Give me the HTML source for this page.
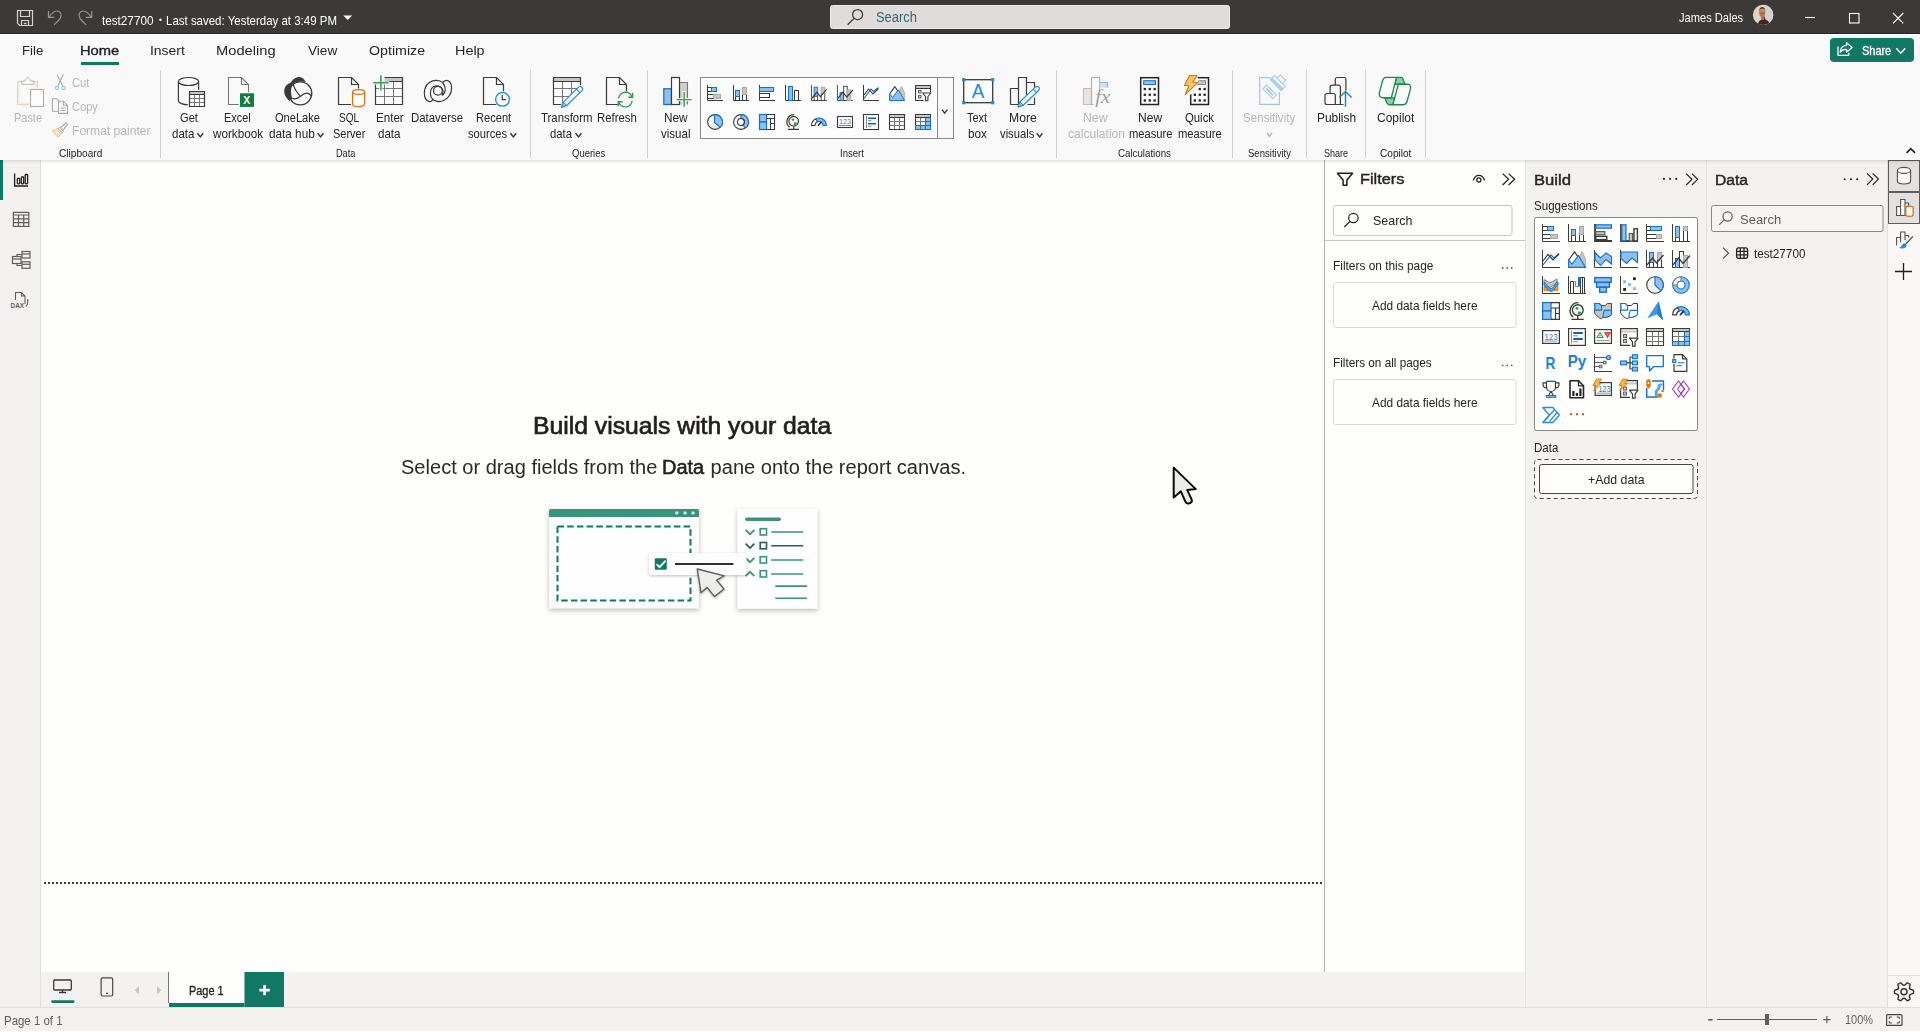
<!DOCTYPE html>
<html lang="en">
<head>
<meta charset="utf-8">
<title>test27700 - Power BI Desktop</title>
<style>
html,body{margin:0;padding:0}
body{width:1920px;height:1032px;position:relative;overflow:hidden;background:#fdfdfc;font-family:"Liberation Sans",sans-serif;-webkit-font-smoothing:antialiased}
.sec{position:absolute;overflow:visible}
.t{position:absolute;white-space:pre;display:block;transform-origin:0 50%}
.a{position:absolute;display:block}
svg{position:absolute;display:block;overflow:visible}
#titlebar{background:#3b3a39;box-shadow:inset 0 -1px 0 #272625}
#menubar{background:#f9f9f9;box-shadow:inset 0 1px 0 #fff}
#ribbon{background:#f9f9f9}
#leftnav{background:#f3f2f1;box-shadow:inset -1px 0 0 #e3e1df}
#canvas{background:#fefefd}
#pagetabs{background:#f3f2f1}
#filters{background:#fefefd;box-shadow:inset 1px 0 0 #b7b3b1}
#build{background:#f3f2f1;box-shadow:inset 1px 0 0 #e6e4e3}
#data{background:#f3f2f1;box-shadow:inset 1px 0 0 #e3e1df}
#rail{background:#f9f8f7;box-shadow:inset 1px 0 0 #e3e1df}
#statusbar{background:#f3f2f1;box-shadow:inset 0 1px 0 #e1dfdd}
.sep{position:absolute;width:1px;top:4px;height:88px;background:#d2d0ce}
.box{position:absolute;box-sizing:border-box}
</style>
</head>
<body>
<div id="titlebar" class="sec" style="left:0px;top:0px;width:1920px;height:34px">
<svg style="left:0;top:0" width="1920" height="34" viewBox="0 0 1920 34" fill="none"><g stroke="#d6d4d2" stroke-width="1.200" stroke-linejoin="miter"><path d="M17.500 10.500H32.500V25.500H19.700L17.500 23.300z"/><path d="M20.500 10.500V16.500H29.500V10.500M21.500 25.500V20.500H28.500V25.500"/><path d="M23.800 23.500h2.600" stroke-width="1.500"/></g><g stroke="#979593" stroke-width="1.200"><path d="M48.500 11v6.400h5.900"/><path d="M49.200 16.800C51.500 13.500 54.500 10.800 57.300 11C59.600 11.200 61.300 13.200 61.100 15.800C60.900 17.800 59.800 19.400 58 21L54.100 24.900"/><path d="M91.700 11v6.400h-5.900"/><path d="M91 16.800C88.700 13.500 85.700 10.800 82.900 11C80.600 11.200 78.900 13.200 79.100 15.800C79.300 17.800 80.400 19.400 82.200 21L86.100 24.900"/></g><path d="M343.3 15.5h9l-4.5 4.6z" fill="#fff"/><rect x="830.500" y="5.500" width="399" height="23" rx="2" fill="#dedddc" stroke="#ebebea"/><g stroke="#3b3a39" stroke-width="1.3"><circle cx="857.6" cy="14.6" r="5"/><path d="M854 18.4L847.6 24.8"/></g><clipPath id="avc"><circle cx="1763.100" cy="14.900" r="10.200"/></clipPath><g clip-path="url(#avc)"><rect x="1752" y="4" width="22" height="22" fill="#dcd3c9"/><rect x="1764" y="4" width="10" height="22" fill="#d3d1cf"/><path d="M1757.600 26c.2-4 1.800-6 4.200-6.600l1.200-3h1.800l.6 3c2.600.6 4.200 2.600 4.400 6.600z" fill="#4a1f26"/><rect x="1761" y="15" width="3.200" height="5" fill="#a8705a"/><ellipse cx="1762.200" cy="12.300" rx="3.100" ry="4.900" fill="#b57b55"/><ellipse cx="1762.400" cy="10.200" rx="2.200" ry="1.600" fill="#d98f3f"/><path d="M1759.100 11c0-5.200 6.200-5.200 6.200 0 0-3.400-6.200-3.400-6.200 0z" fill="#3a3a44"/><path d="M1760.300 13.200h3.800" stroke="#7a5a58" stroke-width=".9"/></g><g stroke="#fff" stroke-width="1.1"><path d="M1805 17.500h10"/><rect x="1849.500" y="13.500" width="9.500" height="9.500"/><path d="M1893 13l10.300 10.300M1903.300 13L1893 23.300"/></g></svg>
<span class="t" style="left:102.40px;top:13.00px;font-size:12.6px;line-height:16px;transform:scaleX(0.9292);color:#ffffff">test27700</span>
<span class="t" style="left:159.20px;top:14.00px;font-size:9px;line-height:12px;transform:scaleX(0.9333);color:#ffffff">•</span>
<span class="t" style="left:166.29px;top:13.00px;font-size:12.6px;line-height:16px;transform:scaleX(0.9111);color:#ffffff">Last saved: Yesterday at 3:49 PM</span>
<span class="t" style="left:875.50px;top:9.00px;font-size:13.8px;line-height:18px;transform:scaleX(0.9363);color:#2c6a70">Search</span>
<span class="t" style="left:1679.00px;top:10.00px;font-size:12.3px;line-height:16px;transform:scaleX(0.9024);color:#ffffff">James Dales</span>
</div>
<div id="menubar" class="sec" style="left:0px;top:34px;width:1920px;height:32px">
<svg style="left:0;top:0" width="1920" height="32" viewBox="0 34 1920 32" fill="none"><rect x="81" y="62" width="38" height="3" fill="#117865"/><rect x="1830" y="38" width="84" height="24" rx="4" fill="#117865"/><g stroke="#fff" stroke-width="1.3" stroke-linejoin="round"><path d="M1838 46.500v8.800h10.800v-2.500"/><path d="M1846.500 42.800l5.600 4.700-5.600 4.700v-2.900c-3.200-.2-5.200 1-6.300 3 .2-4.400 2.400-6.700 6.300-7z"/></g><path d="M1896.3 48.2L1900.8 53.2L1905.3 48.2" stroke="#fff" stroke-width="1.4"/></svg>
<span class="t" style="left:22.22px;top:8.00px;font-size:13.5px;line-height:18px;transform:scaleX(0.9780);color:#252423">File</span>
<span class="t" style="left:80.31px;top:8.00px;font-size:13.5px;line-height:18px;transform:scaleX(1.0898);color:#252423;-webkit-text-stroke:0.38px #252423">Home</span>
<span class="t" style="left:149.67px;top:8.00px;font-size:13.5px;line-height:18px;transform:scaleX(1.0299);color:#252423">Insert</span>
<span class="t" style="left:216.11px;top:8.00px;font-size:13.5px;line-height:18px;transform:scaleX(1.0887);color:#252423">Modeling</span>
<span class="t" style="left:307.50px;top:8.00px;font-size:13.5px;line-height:18px;transform:scaleX(1.0079);color:#252423">View</span>
<span class="t" style="left:368.50px;top:8.00px;font-size:13.5px;line-height:18px;transform:scaleX(1.0521);color:#252423">Optimize</span>
<span class="t" style="left:454.93px;top:8.00px;font-size:13.5px;line-height:18px;transform:scaleX(1.0664);color:#252423">Help</span>
<span class="t" style="left:1861.70px;top:9.00px;font-size:12.4px;line-height:16px;transform:scaleX(0.8833);color:#ffffff;-webkit-text-stroke:0.35px #ffffff">Share</span>
</div>
<div id="ribbon" class="sec" style="left:0px;top:66px;width:1920px;height:94px">
<svg style="left:0;top:0" width="1920" height="94" viewBox="0 66 1920 94" fill="none"><rect x="160" y="70" width="1" height="88" fill="#d2d0ce"/><rect x="530" y="70" width="1" height="88" fill="#d2d0ce"/><rect x="647" y="70" width="1" height="88" fill="#d2d0ce"/><rect x="1056" y="70" width="1" height="88" fill="#d2d0ce"/><rect x="1232" y="70" width="1" height="88" fill="#d2d0ce"/><rect x="1306" y="70" width="1" height="88" fill="#d2d0ce"/><rect x="1365" y="70" width="1" height="88" fill="#d2d0ce"/><rect x="1425" y="70" width="1" height="88" fill="#d2d0ce"/><rect x="17.500" y="81.500" width="20" height="23" fill="#f3ebe5"/><rect x="19.500" y="83" width="16" height="19.500" fill="#fbfbfb"/><rect x="17.500" y="81.500" width="20" height="23" stroke="#f6b870" stroke-dasharray="1.200 .800"/><path d="M21.600 84.400v-3.400h3.600c.2-2.200 1.200-3.300 2.600-3.300s2.400 1.100 2.600 3.300h3.600v3.400z" fill="#fbfbfb" stroke="#bcbab8" stroke-width="1"/><rect x="29.300" y="88.300" width="15.400" height="19.400" fill="#f9f9f9"/><rect x="30.500" y="89.500" width="13" height="17" fill="#fcfcfc" stroke="#b0aeac" stroke-width="1.100"/><g opacity=".6"><path d="M57 74.600l5.800 11.600M63.400 74.600l-5.800 11.600" stroke="#797775" stroke-width="1.100"/><rect x="55.600" y="86.400" width="3" height="3" fill="#cfe6f8" stroke="#5fb0ec" stroke-width="1"/><rect x="62" y="86.400" width="3" height="3" fill="#cfe6f8" stroke="#5fb0ec" stroke-width="1"/></g><g opacity=".6" stroke="#797775" stroke-width="1.100"><path d="M58 111.300h-5.600v-12.600h4.400l2.400 2.400"/><path d="M58.500 101.200h5l4 4v8.200h-9z" fill="#fcfcfc"/><path d="M63.500 101.200v4h4M60.500 108h5M60.500 110.500h5"/></g><g opacity=".6"><path d="M66.200 123l1.400 1.400-5 6.200-2.600-2.600z" fill="#fcfcfc" stroke="#797775" stroke-width="1.100" stroke-linejoin="round"/><path d="M59.500 127.500l3.800 3.800-1.200 1.500-4.100-4.100z" fill="#fcfcfc" stroke="#797775" stroke-width="1"/><path d="M57.600 128.600l4.400 4.400-4 3.800c-1.800-1.800-4-4.200-5.400-6.600 1.800.3 3.600-.4 5-1.600z" fill="#fbe3c6" stroke="#f0a040" stroke-width="1.100" stroke-linejoin="round"/></g><path d="M178.4 81.5v19.299999999999997a10.1 4 0 0 0 20.2 0v-19.299999999999997" fill="none" stroke="#3b3a39" stroke-width="1.2"/><ellipse cx="188.5" cy="81.5" rx="10.1" ry="4" fill="none" stroke="#3b3a39" stroke-width="1.2"/><rect x="187.800" y="89.800" width="19" height="19" fill="#f9f9f9"/><rect x="189.5" y="91.5" width="15" height="15" fill="#fdfdfd"/><rect x="189.5" y="91.5" width="15" height="3.2" fill="#c8c6c4"/><path d="M189.5 94.5h15M189.5 98.5h15M189.5 102.5h15M194.5 94.7v11.8M199.5 94.7v11.8" stroke="#7a7876" stroke-width="1"/><path d="M189.5 91.5h15v15h-15zM189.5 94.5h15" stroke="#3b3a39" stroke-width="1.2"/><path d="M197.4 133.3L200.3 136.9L203.2 133.3" stroke="#3b3a39" stroke-width="1.5"/><path d="M228.5 77.5h13l7 7v20h-20z" stroke="#797775" stroke-width="1.1" fill="none" stroke-linejoin="miter"/><path d="M241.5 77.5v7h7" stroke="#797775" stroke-width="1.1"/><rect x="238.800" y="92.100" width="17" height="16" fill="#f9f9f9"/><rect x="240" y="93.300" width="14" height="13.600" fill="#107c41"/><text x="243.200" y="104" font-size="10.500" font-weight="700" fill="#fff" font-family="Liberation Sans, sans-serif">X</text><circle cx="300.300" cy="93.300" r="11.500" stroke="#3b3a39" stroke-width="1.300"/><path d="M289.600 101C285.600 97.800 283.700 94 284.200 90.200C284.800 86.500 287.400 83.800 290.800 82.600C292.800 79 296 76.900 298.800 76.900C301.600 76.900 304.400 78.700 305.800 82.100C303 81.300 297 81.200 292.700 83.900C290.700 87 290.500 94 292.500 98.600z" fill="#3b3a39"/><path d="M292.800 83.600C294.500 88.500 297 93 300.600 96.200M292.200 98.400C295 99.400 298 98.300 300.600 96.200C303.400 93.800 306.500 92.600 308.800 93.600C310 94.100 310.800 95 311.300 96.200" stroke="#3b3a39" stroke-width="1.200"/><path d="M317.6 133.3L320.5 136.9L323.4 133.3" stroke="#3b3a39" stroke-width="1.5"/><path d="M338.5 77.5h13l7 7v20h-20z" stroke="#3b3a39" stroke-width="1.2" fill="none" stroke-linejoin="miter"/><path d="M351.5 77.5v7h7" stroke="#3b3a39" stroke-width="1.2"/><rect x="351" y="88.500" width="15.500" height="19.500" rx="4" fill="#f9f9f9"/><path d="M352.6 92.0v12.2a6 2.4 0 0 0 12 0v-12.2" fill="#fdfdfd" stroke="#d9701a" stroke-width="1.3"/><ellipse cx="358.6" cy="92.0" rx="6" ry="2.4" fill="#fdfdfd" stroke="#d9701a" stroke-width="1.3"/><rect x="375.5" y="77.5" width="27" height="27" fill="#fdfdfd"/><rect x="375.5" y="77.5" width="27" height="3.6" fill="#c8c6c4"/><path d="M375.5 81.5h27M375.5 88.5h27M375.5 96.5h27M384.5 81.1v23.4M393.5 81.1v23.4" stroke="#7a7876" stroke-width="1"/><path d="M375.5 77.5h27v27h-27zM375.5 81.5h27" stroke="#3b3a39" stroke-width="1.2"/><rect x="374" y="76" width="10.500" height="5.800" fill="#f9f9f9"/><path d="M372.300 82.800h17M380.900 74.300v17" stroke="#f9f9f9" stroke-width="3.200"/><path d="M373.300 82.800h15.200M380.900 75.200v15.200" stroke="#2e9e4f" stroke-width="1.500"/><g stroke="#3b3a39" stroke-width="1.250"><path d="M442.600 82.600C439.700 79.800 434 79.400 429.600 82.200C425.100 85.100 423.500 91.200 424.700 96.500C425.500 100.100 428.400 102.200 430.800 101.300C432 100.900 432.800 100.100 432.600 99.100C430 96.500 429.600 91.200 432 87.900C434 85.500 438.100 85.100 441 87.500C443.400 89.500 443.800 93.200 441.800 95"/><path d="M442.600 82.600C443.800 80.600 447.100 79.400 449.500 81.800C452.400 84.700 452.400 91.200 449.100 96C446.300 100.100 441.400 102.200 437.300 101.300C434.500 100.700 432.800 99.300 432.600 99.100"/><path d="M442.600 82.600C444.600 85.100 445.900 89.100 444.600 92.400C443.800 94.400 442.600 95.200 441.800 95"/><circle cx="437.900" cy="90.800" r="4.400"/></g><path d="M483.5 77.5h13l7 7v20h-20z" stroke="#3b3a39" stroke-width="1.2" fill="none" stroke-linejoin="miter"/><path d="M496.5 77.5v7h7" stroke="#3b3a39" stroke-width="1.2"/><circle cx="502.500" cy="99.300" r="8.200" fill="#f9f9f9"/><circle cx="502.500" cy="99.300" r="6.900" fill="#fdfdfd" stroke="#1f8ad8" stroke-width="1.300"/><path d="M502.300 95v4.600h3.600" stroke="#3b3a39" stroke-width="1.200"/><path d="M510.4 133.3L513.3 136.9L516.2 133.3" stroke="#3b3a39" stroke-width="1.5"/><rect x="553.5" y="77.5" width="27" height="27" fill="#fdfdfd"/><rect x="553.5" y="77.5" width="27" height="3.6" fill="#c8c6c4"/><path d="M553.5 81.5h27M553.5 88.5h27M553.5 96.5h27M562.5 81.1v23.4M571.5 81.1v23.4" stroke="#7a7876" stroke-width="1"/><path d="M553.5 77.5h27v27h-27zM553.5 81.5h27" stroke="#3b3a39" stroke-width="1.2"/><path d="M560 105.800L581.400 84.400h3.600v24.600h-25z" fill="#f9f9f9"/><path d="M561.50 107.30L566.75 105.51L581.95 90.61A2.4 2.4 0 0 0 578.59 87.19L563.39 102.09z" fill="#fdfdfd" stroke="#1f8ad8" stroke-width="1.100" stroke-linejoin="round"/><path d="M561.50 107.30L566.75 105.51L563.39 102.09z" fill="#8ec1ed" stroke="#1f8ad8" stroke-width="1" stroke-linejoin="round"/><path d="M579.81 92.71L576.45 89.29" stroke="#1f8ad8" stroke-width="1.100"/><path d="M575.6 133.3L578.5 136.9L581.4 133.3" stroke="#3b3a39" stroke-width="1.5"/><path d="M606.5 77.5h13l7 7v20h-20z" stroke="#3b3a39" stroke-width="1.2" fill="none" stroke-linejoin="miter"/><path d="M619.5 77.5v7h7" stroke="#3b3a39" stroke-width="1.2"/><circle cx="625.400" cy="99.600" r="8.600" fill="#f9f9f9"/><g stroke="#2e9e4f" stroke-width="1.400"><path d="M618.700 98.400A6.800 6.800 0 0 1 632 97.100M632.100 100.800A6.800 6.800 0 0 1 618.800 102"/><path d="M628.200 97.200H632.600V92.800M622.600 101.700H618.200V106.200"/></g><rect x="679.500" y="82.500" width="8" height="22" fill="#d0cecc"/><path d="M679.500 82.500h8v22" stroke="#7a7876" stroke-width="1.100"/><rect x="663.800" y="88.800" width="7.700" height="15.700" fill="#8ec1ed" stroke="#1670c6" stroke-width="1.300"/><rect x="671.500" y="77.500" width="8" height="27" fill="#fdfdfd" stroke="#3b3a39" stroke-width="1.200"/><path d="M675.800 99.600h16.800M684.200 91v16.600" stroke="#f9f9f9" stroke-width="3.400"/><path d="M676.700 99.600h15M684.200 91.700v15.100" stroke="#2e9e4f" stroke-width="1.400"/><rect x="700.500" y="77.500" width="253" height="61" fill="#fdfdfd" stroke="#8a8886"/><rect x="938" y="78" width="15" height="60" fill="#f9f9f9"/><rect x="937" y="78" width="1" height="60" fill="#8a8886"/><path d="M942 109.6L944.7 113.2L947.4 109.6" stroke="#3b3a39" stroke-width="1.4"/><g transform="translate(707 85)" fill="none"><path d="M.5 0v15.500H16" stroke="#3b3a39"/><rect x="0.5" y="2.5" width="4" height="4" fill="#fff" stroke="#3b3a39" stroke-width="1"/><rect x="4.5" y="2.5" width="5" height="4" fill="#8ec1ed" stroke="#1670c6" stroke-width="1"/><rect x="0.5" y="9.5" width="6" height="4" fill="#fff" stroke="#3b3a39" stroke-width="1"/><rect x="6.5" y="9.5" width="7" height="4" fill="#c8c6c4" stroke="#a8a6a4" stroke-width="1"/></g><g transform="translate(733 85)" fill="none"><path d="M.5 0v15.500H16" stroke="#3b3a39"/><rect x="2.5" y="11.5" width="4" height="4" fill="#fff" stroke="#3b3a39" stroke-width="1"/><rect x="2.5" y="5.5" width="4" height="6" fill="#8ec1ed" stroke="#1670c6" stroke-width="1"/><rect x="9.5" y="9.5" width="4" height="6" fill="#fff" stroke="#3b3a39" stroke-width="1"/><rect x="9.5" y="2.5" width="4" height="7" fill="#c8c6c4" stroke="#a8a6a4" stroke-width="1"/></g><g transform="translate(759 85)" fill="none"><path d="M.5 0v15.500H16" stroke="#3b3a39"/><rect x="0.5" y="2.5" width="14" height="4" fill="#8ec1ed" stroke="#1670c6" stroke-width="1"/><rect x="0.5" y="8.5" width="10" height="4" fill="#fff" stroke="#3b3a39" stroke-width="1"/></g><g transform="translate(785 85)" fill="none"><path d="M.5 0v15.500H16" stroke="#3b3a39"/><rect x="3.5" y="1.5" width="4" height="14" fill="#8ec1ed" stroke="#1670c6" stroke-width="1"/><rect x="9.5" y="5.5" width="4" height="10" fill="#fff" stroke="#3b3a39" stroke-width="1"/></g><g transform="translate(811 85) scale(0.8889)" fill="none"><path d="M.5 0v17.500H18" stroke="#3b3a39"/><rect x="3.5" y="12.5" width="4" height="5" fill="#fff" stroke="#3b3a39" stroke-width="1"/><rect x="3.5" y="2.5" width="4" height="10" fill="#8ec1ed" stroke="#1670c6" stroke-width="1"/><rect x="11.5" y="9.5" width="4" height="8" fill="#fff" stroke="#3b3a39" stroke-width="1"/><rect x="11.5" y="2.5" width="4" height="7" fill="#c8c6c4" stroke="#a8a6a4" stroke-width="1"/><path d="M1 15l5.500-7 4 5 7-8" stroke="#3b3a39" stroke-width="1.300"/></g><g transform="translate(837 85) scale(0.8889)" fill="none"><path d="M.5 0v17.500H18" stroke="#3b3a39"/><rect x="3.5" y="8.5" width="4" height="9" fill="#8ec1ed" stroke="#1670c6" stroke-width="1"/><rect x="7.5" y="1.5" width="4" height="16" fill="#fff" stroke="#3b3a39" stroke-width="1"/><rect x="11.5" y="5.5" width="4" height="12" fill="#c8c6c4" stroke="#a8a6a4" stroke-width="1"/><path d="M1 15l5.500-7 4.500 5.500 7-8" stroke="#3b3a39" stroke-width="1.300"/></g><g transform="translate(863 85)" fill="none"><path d="M.5 0v15.500H16" stroke="#3b3a39"/><path d="M1 13.500l7-9.500 2.500 2.500 5-4" stroke="#1670c6" stroke-width="1.100"/><path d="M1 10l4.500-6 4.500 5 5.500-5.500" stroke="#3b3a39" stroke-width="1.100"/></g><g transform="translate(889 85) scale(0.8889)" fill="none"><path d="M10 10l4-8.500 3.500 7v9H10z" fill="#c8c6c4" stroke="#a8a6a4" stroke-width=".8"/><path d="M.8 10L6.500 1.800l5.500 8" stroke="#3b3a39" stroke-width="1.200" fill="#fff"/><path d="M.600 17.400V10l3.400 4 6.500-8.500 7 11.900z" fill="#8ec1ed" stroke="#1670c6" stroke-width="1.100"/></g><g transform="translate(915 85)" fill="none"><rect x="1" y="1" width="14" height="2" fill="#c8c6c4"/><path d="M8.500 15.500H.5V.5h15v7M.5 3.500h15" stroke="#3b3a39" stroke-width="1.100"/><rect x="3.5" y="5.5" width="2.5" height="2.5" fill="#c8c6c4" stroke="#605e5c" stroke-width="0.9"/><rect x="3.5" y="10.5" width="2.5" height="2.5" fill="#c8c6c4" stroke="#605e5c" stroke-width="0.9"/><path d="M7.600 8h8.300l-3 3.500v4.200h-2.300v-4.200z" fill="#fff" stroke="#3b3a39" stroke-width="1.100" stroke-linejoin="round"/></g><g transform="translate(707 114)" fill="none"><circle cx="8" cy="8" r="7.400" fill="#f6f6f6" stroke="#3b3a39" stroke-width="1.100"/><path d="M7.500 .600h.5a7.400 7.400 0 0 1 5.200 12.700L7.500 8.500z" fill="#8ec1ed" stroke="#1670c6" stroke-width="1.100" stroke-linejoin="round"/></g><g transform="translate(733 114)" fill="none"><circle cx="8" cy="8" r="7.400" fill="#fbfbfb" stroke="#3b3a39" stroke-width="1.100"/><path d="M8 .600a7.400 7.400 0 0 1 4.200 13.500l-2.200-3.300a3.500 3.500 0 0 0-2-6.300z" fill="#8ec1ed" stroke="#1670c6" stroke-width="1.100" stroke-linejoin="round"/><circle cx="8" cy="8" r="3.500" stroke="#3b3a39" stroke-width="1.100"/></g><g transform="translate(759 114)" fill="none"><rect x="0.5" y="0.5" width="7" height="7.5" fill="#8ec1ed" stroke="#1670c6" stroke-width="1.2"/><rect x="0.5" y="8" width="7" height="7.5" fill="#8ec1ed" stroke="#1670c6" stroke-width="1.2"/><path d="M7.500 .500h8v15h-8M7.500 4.500h8M11.500 4.500v11M11.500 9.500h4" stroke="#3b3a39" stroke-width="1.100"/></g><g transform="translate(785 114)" fill="none"><circle cx="8.700" cy="7.200" r="4.800" fill="#f4f8f4" stroke="#3b3a39" stroke-width="1.200"/><path d="M6.500 5.200c1.300-1.600 3.600-.4 2.700.9-.7 1.100-2.200 1.300-2.700-.9zM9 8.700c1.100-.7 3.100-.4 2.700 1.100-.4 1.300-2.200 1.800-3.100.700z" fill="#2f9e44"/><path d="M9.300 .600A7.200 7.200 0 0 0 4.600 13.400M3 15.400h11M8.700 12.200v3.200" stroke="#3b3a39" stroke-width="1.200"/></g><g transform="translate(811 114)" fill="none"><path d="M.600 11.500A7.400 7.400 0 0 1 5 4.730L6.380 7.840A4 4 0 0 0 4 11.500z" fill="#fdfdfd" stroke="#3b3a39" stroke-width="1.100" stroke-linejoin="round"/><path d="M5 4.730A7.400 7.400 0 0 1 15.400 11.500H12A4 4 0 0 0 6.380 7.840z" fill="#7db8ec" stroke="#1670c6" stroke-width="1.100" stroke-linejoin="round"/><path d="M7.400 11.300l2.800-3" stroke="#252423" stroke-width="1.500" stroke-linecap="round"/></g><g transform="translate(837 114)" fill="none"><rect x="0.5" y="2.5" width="15" height="11" fill="#fff" stroke="#3b3a39" stroke-width="1.1"/><text x="2" y="10.300" font-size="8" fill="#2b88d8" font-family="Liberation Sans, sans-serif" textLength="12" lengthAdjust="spacingAndGlyphs">123</text><path d="M2 11.500h12" stroke="#7a7876" stroke-width=".9"/></g><g transform="translate(863 114)" fill="none"><rect x="0.5" y="0.5" width="15" height="15" fill="#fff" stroke="#3b3a39" stroke-width="1.1"/><path d="M3.500 2v12" stroke="#7a7876" stroke-width=".9"/><path d="M5 4.200h8M5 9.700h8" stroke="#155fb0" stroke-width="1.600"/><path d="M5 6.700h3.500M5 12.200h3.500" stroke="#7a7876" stroke-width=".9"/></g><g transform="translate(889 114)" fill="none"><rect x="1" y="1" width="14" height="2.5" fill="#c8c6c4"/><path d="M.5 7.500h15M.5 11.500h15M5.500 3.500v12M10.500 3.500v12" stroke="#7a7876"/><path d="M.5 .500h15v15H.5zM.5 3.500h15" stroke="#3b3a39" stroke-width="1.100"/></g><g transform="translate(915 114)" fill="none"><rect x="1" y="1" width="14" height="2.5" fill="#c8c6c4"/><rect x="10.5" y="3.5" width="5" height="12" fill="#8ec1ed"/><rect x="0.5" y="11.5" width="15" height="4" fill="#8ec1ed"/><path d="M.5 7.500h10M5.500 3.500v8" stroke="#7a7876"/><path d="M15.500 3.500V.5H.5v11M.5 3.500h15" stroke="#3b3a39" stroke-width="1.100"/><path d="M10.500 3.500v12M.5 11.500h15M10.500 7.500h5M5.500 11.500v4M.5 11.500v4h15v-12" stroke="#1670c6" stroke-width="1.100"/></g><rect x="963.700" y="79.700" width="29" height="23" fill="#fdfdfd" stroke="#3b3a39" stroke-width="1.300"/><rect x="962.1" y="78.10000000000001" width="3.200" height="3.200" fill="#1f8ad8"/><rect x="991.1" y="78.10000000000001" width="3.200" height="3.200" fill="#1f8ad8"/><rect x="962.1" y="101.10000000000001" width="3.200" height="3.200" fill="#1f8ad8"/><rect x="991.1" y="101.10000000000001" width="3.200" height="3.200" fill="#1f8ad8"/><text x="971.700" y="98.100" font-size="20.500" fill="#1f8ad8" font-family="Liberation Sans, sans-serif" textLength="12.600" lengthAdjust="spacingAndGlyphs">A</text><g stroke="#3b3a39" stroke-width="1.200"><path d="M1010.500 104.500v-16h8M1018.500 104.500v-27h8v27M1026.500 82.500h8v22M1010.500 104.500h24"/></g><path d="M1018.500 108.500l2.500-6.500 15-15 4.500 4.500-15 15z" fill="#f9f9f9"/><path d="M1018.00 107.00L1023.27 105.27L1038.62 90.52A2.4 2.4 0 0 0 1035.30 87.06L1019.94 101.81z" fill="#fdfdfd" stroke="#1f8ad8" stroke-width="1.100" stroke-linejoin="round"/><path d="M1018.00 107.00L1023.27 105.27L1019.94 101.81z" fill="#8ec1ed" stroke="#1f8ad8" stroke-width="1" stroke-linejoin="round"/><path d="M1036.46 92.59L1033.13 89.13" stroke="#1f8ad8" stroke-width="1.100"/><path d="M1036.7 133.3L1039.6 136.9L1042.5 133.3" stroke="#3b3a39" stroke-width="1.5"/><rect x="1083.500" y="88.500" width="8" height="16" fill="#e7e5e3" stroke="#c0bebc" stroke-width="1.100"/><path d="M1093.500 104.500h-2V77.500h8.200V91.200" fill="none" stroke="#b3b1af" stroke-width="1.150"/><rect x="1100.100" y="82.500" width="7.500" height="5.200" fill="#c9e3f6"/><path d="M1100.100 82.500h7.400v4.800" stroke="#7fbbee" stroke-width="1.200"/><text x="1095.300" y="102.500" font-size="18" font-style="italic" fill="#9f9d9b" font-family="Liberation Serif, serif" textLength="15" lengthAdjust="spacingAndGlyphs">fx</text><rect x="1140.7" y="77.7" width="17.800" height="26.800" fill="#fdfdfd" stroke="#252423" stroke-width="1.500"/><rect x="1143.7" y="80.7" width="11.800" height="3.800" fill="#8ec1ed" stroke="#1670c6" stroke-width="1"/><rect x="1143.7" y="87.9" width="2.300" height="2.300" fill="#252423"/><rect x="1148.6" y="87.9" width="2.300" height="2.300" fill="#252423"/><rect x="1153.5" y="87.9" width="2.300" height="2.300" fill="#252423"/><rect x="1143.7" y="93.6" width="2.300" height="2.300" fill="#252423"/><rect x="1148.6" y="93.6" width="2.300" height="2.300" fill="#252423"/><rect x="1153.5" y="93.6" width="2.300" height="2.300" fill="#252423"/><rect x="1143.7" y="99.3" width="2.300" height="2.300" fill="#252423"/><rect x="1148.6" y="99.3" width="2.300" height="2.300" fill="#252423"/><rect x="1153.5" y="99.3" width="2.300" height="2.300" fill="#252423"/><rect x="1190.7" y="77.7" width="17.800" height="26.800" fill="#fdfdfd" stroke="#252423" stroke-width="1.500"/><rect x="1193.7" y="80.7" width="11.800" height="3.800" fill="#c8c6c4" stroke="#8a8886" stroke-width="1"/><rect x="1193.7" y="87.9" width="2.300" height="2.300" fill="#252423"/><rect x="1198.6" y="87.9" width="2.300" height="2.300" fill="#252423"/><rect x="1203.5" y="87.9" width="2.300" height="2.300" fill="#252423"/><rect x="1193.7" y="93.6" width="2.300" height="2.300" fill="#252423"/><rect x="1198.6" y="93.6" width="2.300" height="2.300" fill="#252423"/><rect x="1203.5" y="93.6" width="2.300" height="2.300" fill="#252423"/><rect x="1193.7" y="99.3" width="2.300" height="2.300" fill="#252423"/><rect x="1198.6" y="99.3" width="2.300" height="2.300" fill="#252423"/><rect x="1203.5" y="99.3" width="2.300" height="2.300" fill="#252423"/><path d="M1188.500 77l8-3 2 6-3 12-8 4z" fill="#f9f9f9"/><path d="M1189.500 75.500h7.500l-4.200 6.800h5.200l-12.800 12.400 3.600-9.200h-4.400z" fill="#f9c46a" stroke="#e0760f" stroke-width="1.100" stroke-linejoin="round"/><g stroke="#97c9ec" stroke-width="1.200"><path d="M1270.400 77.700h-10.700v26.600h19.700v-12.200"/><g transform="translate(1269.700 91.800) rotate(45)"><rect x="-7" y="-2.600" width="14" height="5.200" fill="#fbfbfb" stroke-width="1"/><path d="M-4.800 0h9.600" stroke-width="1.600"/></g><g transform="translate(1277.800 82.900) rotate(45)"><rect x="-7.700" y="-3" width="15.400" height="6" fill="#fbfbfb" stroke-width="1"/><rect x="-7.700" y="0" width="15.400" height="3" fill="#a5d0ef" stroke="none"/></g><g transform="translate(1281.500 79.300) rotate(45)"><rect x="-3.800" y="-2.300" width="7.600" height="4.600" fill="#fbfbfb" stroke-width="1"/></g></g><path d="M1266.8 132.8L1269.4 136.4L1272 132.8" stroke="#b3b0ad" stroke-width="1.3"/><g stroke="#3b3a39" stroke-width="1.200"><path d="M1335.300 85v-5.500a2 2 0 0 1 2-2h6.600a2 2 0 0 1 2 2v11"/><path d="M1330.100 93.500v-6.400a2 2 0 0 1 2-2h6.300a2 2 0 0 1 2 2v17.400"/><path d="M1343.500 104.500h-16.500a2 2 0 0 1-2-2v-7a2 2 0 0 1 2-2h6.300a2 2 0 0 1 2 2v9"/></g><path d="M1345.500 106.800v-15M1339.400 97.600l6.100-6.100 6.100 6.100" stroke="#1f7fd0" stroke-width="1.400"/><g stroke="#1e8a4c" stroke-width="1.350" stroke-linejoin="round"><path d="M1396.500 77.300L1401.200 77.300C1402.600 77.500 1403.200 79 1403.600 80.600C1404.100 82.200 1404.500 83.400 1405.300 84.200L1394.800 84.200Z" fill="#8ec9a8"/><path d="M1384.500 97.800L1394.700 97.800L1392.900 104.700L1388.800 104.700C1387.200 104.400 1386.600 103 1386.100 101.300C1385.900 99.900 1385.500 98.500 1384.500 97.800Z" fill="#8ec9a8"/><path d="M1385.700 77.300L1396.500 77.300L1391.400 97.700L1382.300 97.700C1379.800 97.500 1378.700 95.200 1379.500 92.200L1382.600 80.600C1383.300 78.300 1384.100 77.400 1385.700 77.300Z" fill="#fbfbfb"/><path d="M1398.400 84.200L1408.100 84.200C1410.200 84.400 1411 86.300 1410.400 89.100L1407.100 101.300C1406.500 103.400 1405.700 104.500 1403.900 104.700L1392.900 104.700Z" fill="#fbfbfb"/></g><path d="M1906.600 152.800l4.200-4.200 4.200 4.200" stroke="#252423" stroke-width="1.700"/></svg>
<span class="t" style="left:13.70px;top:44.00px;font-size:12.2px;line-height:16px;transform:scaleX(0.8984);color:#b9b7b5">Paste</span>
<span class="t" style="left:72.20px;top:9.00px;font-size:12.2px;line-height:16px;transform:scaleX(0.9193);color:#b9b7b5">Cut</span>
<span class="t" style="left:72.20px;top:33.00px;font-size:12.2px;line-height:16px;transform:scaleX(0.9095);color:#b9b7b5">Copy</span>
<span class="t" style="left:71.71px;top:57.00px;font-size:12.2px;line-height:16px;transform:scaleX(0.9912);color:#b9b7b5">Format painter</span>
<span class="t" style="left:58.60px;top:81.00px;font-size:10.1px;line-height:13px;transform:scaleX(1.0026);color:#252423">Clipboard</span>
<span class="t" style="left:180.20px;top:44.00px;font-size:12.2px;line-height:16px;transform:scaleX(0.9132);color:#252423">Get</span>
<span class="t" style="left:171.70px;top:60.00px;font-size:12.2px;line-height:16px;transform:scaleX(0.9439);color:#252423">data</span>
<span class="t" style="left:224.21px;top:44.00px;font-size:12.2px;line-height:16px;transform:scaleX(0.8934);color:#252423">Excel</span>
<span class="t" style="left:212.96px;top:60.00px;font-size:12.2px;line-height:16px;transform:scaleX(0.9599);color:#252423">workbook</span>
<span class="t" style="left:274.90px;top:44.00px;font-size:12.2px;line-height:16px;transform:scaleX(0.9097);color:#252423">OneLake</span>
<span class="t" style="left:268.80px;top:60.00px;font-size:12.2px;line-height:16px;transform:scaleX(0.9630);color:#252423">data hub</span>
<span class="t" style="left:339.40px;top:44.00px;font-size:12.2px;line-height:16px;transform:scaleX(0.8290);color:#252423">SQL</span>
<span class="t" style="left:333.40px;top:60.00px;font-size:12.2px;line-height:16px;transform:scaleX(0.9013);color:#252423">Server</span>
<span class="t" style="left:375.55px;top:44.00px;font-size:12.2px;line-height:16px;transform:scaleX(0.9512);color:#252423">Enter</span>
<span class="t" style="left:377.90px;top:60.00px;font-size:12.2px;line-height:16px;transform:scaleX(0.9481);color:#252423">data</span>
<span class="t" style="left:411.16px;top:44.00px;font-size:12.2px;line-height:16px;transform:scaleX(0.9367);color:#252423">Dataverse</span>
<span class="t" style="left:475.79px;top:44.00px;font-size:12.2px;line-height:16px;transform:scaleX(0.9103);color:#252423">Recent</span>
<span class="t" style="left:468.30px;top:60.00px;font-size:12.2px;line-height:16px;transform:scaleX(0.9159);color:#252423">sources</span>
<span class="t" style="left:335.70px;top:81.00px;font-size:10.1px;line-height:13px;transform:scaleX(0.9075);color:#252423">Data</span>
<span class="t" style="left:541.30px;top:44.00px;font-size:12.2px;line-height:16px;transform:scaleX(0.9340);color:#252423">Transform</span>
<span class="t" style="left:550.00px;top:60.00px;font-size:12.2px;line-height:16px;transform:scaleX(0.9272);color:#252423">data</span>
<span class="t" style="left:596.97px;top:44.00px;font-size:12.2px;line-height:16px;transform:scaleX(0.9316);color:#252423">Refresh</span>
<span class="t" style="left:572.00px;top:81.00px;font-size:10.1px;line-height:13px;transform:scaleX(0.9406);color:#252423">Queries</span>
<span class="t" style="left:663.53px;top:44.00px;font-size:12.2px;line-height:16px;transform:scaleX(0.9669);color:#252423">New</span>
<span class="t" style="left:661.20px;top:60.00px;font-size:12.2px;line-height:16px;transform:scaleX(0.9458);color:#252423">visual</span>
<span class="t" style="left:839.90px;top:81.00px;font-size:10.1px;line-height:13px;transform:scaleX(0.9434);color:#252423">Insert</span>
<span class="t" style="left:967.30px;top:44.00px;font-size:12.2px;line-height:16px;transform:scaleX(0.9014);color:#252423">Text</span>
<span class="t" style="left:968.40px;top:60.00px;font-size:12.2px;line-height:16px;transform:scaleX(0.9613);color:#252423">box</span>
<span class="t" style="left:1008.70px;top:44.00px;font-size:12.2px;line-height:16px;transform:scaleX(1.0004);color:#252423">More</span>
<span class="t" style="left:999.80px;top:60.00px;font-size:12.2px;line-height:16px;transform:scaleX(0.9231);color:#252423">visuals</span>
<span class="t" style="left:1082.69px;top:44.00px;font-size:12.2px;line-height:16px;transform:scaleX(1.0051);color:#b9b7b5">New</span>
<span class="t" style="left:1067.60px;top:60.00px;font-size:12.2px;line-height:16px;transform:scaleX(0.9893);color:#b9b7b5">calculation</span>
<span class="t" style="left:1138.01px;top:44.00px;font-size:12.2px;line-height:16px;transform:scaleX(0.9881);color:#252423">New</span>
<span class="t" style="left:1128.70px;top:60.00px;font-size:12.2px;line-height:16px;transform:scaleX(0.9173);color:#252423">measure</span>
<span class="t" style="left:1185.00px;top:44.00px;font-size:12.2px;line-height:16px;transform:scaleX(0.9295);color:#252423">Quick</span>
<span class="t" style="left:1177.70px;top:60.00px;font-size:12.2px;line-height:16px;transform:scaleX(0.9215);color:#252423">measure</span>
<span class="t" style="left:1118.00px;top:81.00px;font-size:10.1px;line-height:13px;transform:scaleX(0.9629);color:#252423">Calculations</span>
<span class="t" style="left:1243.00px;top:44.00px;font-size:12.2px;line-height:16px;transform:scaleX(0.9522);color:#b9b7b5">Sensitivity</span>
<span class="t" style="left:1247.80px;top:81.00px;font-size:10.1px;line-height:13px;transform:scaleX(0.9463);color:#252423">Sensitivity</span>
<span class="t" style="left:1316.72px;top:44.00px;font-size:12.2px;line-height:16px;transform:scaleX(0.9766);color:#252423">Publish</span>
<span class="t" style="left:1324.00px;top:81.00px;font-size:10.1px;line-height:13px;transform:scaleX(0.8894);color:#252423">Share</span>
<span class="t" style="left:1376.50px;top:44.00px;font-size:12.2px;line-height:16px;transform:scaleX(0.9831);color:#252423">Copilot</span>
<span class="t" style="left:1379.70px;top:81.00px;font-size:10.1px;line-height:13px;transform:scaleX(0.9995);color:#252423">Copilot</span>
</div>
<div id="leftnav" class="sec" style="left:0px;top:160px;width:41px;height:847px">
<svg style="left:0;top:0" width="41" height="847" viewBox="0 160 41 847" fill="none"><rect x="0" y="160" width="3" height="40" fill="#117865"/><g stroke="#201f1e" stroke-width="1.300"><path d="M14.600 173.400v12.600M14 186h14"/><rect x="17.300" y="178.300" width="2.400" height="5.600" rx=".8"/><rect x="21.300" y="177" width="2.400" height="6.900" rx=".8"/><rect x="25.200" y="174.500" width="2.400" height="9.400" rx=".8"/></g><g stroke="#605e5c" stroke-width="1.200"><rect x="13.400" y="212.400" width="15.400" height="14"/><path d="M13.400 215h15.400M13.400 218.800h15.400M13.400 222.600h15.400M18.500 215v11.400M23.700 215v11.400"/></g><g stroke="#605e5c" stroke-width="1.200"><rect x="12.500" y="256.500" width="8.500" height="7"/><path d="M12.500 259h8.500"/><rect x="22" y="251.500" width="8" height="6.500"/><path d="M22 254h8"/><rect x="22" y="261.800" width="8" height="6.500"/><path d="M22 264.300h8"/><path d="M17 256.500v-2h5M17 263.500v2h5"/></g><g stroke="#605e5c" stroke-width="1.100"><path d="M15.500 300v-7.500h6l3.500 3.500v8M21.500 292.500v3.500h3.500"/><path d="M27.700 299v3.500c0 2-.8 3.200-2 3.800"/></g><text x="10.600" y="307.500" font-size="6.500" font-weight="700" fill="#605e5c" font-family="Liberation Sans, sans-serif" textLength="13.500" lengthAdjust="spacingAndGlyphs">DAX</text></svg>
</div>
<div id="canvas" class="sec" style="left:41px;top:160px;width:1283px;height:812px">
<svg style="left:0;top:0" width="1283" height="812" viewBox="41 160 1283 812" fill="none"><path d="M44 883H1323" stroke="#404040" stroke-width="2" stroke-dasharray="2 2"/><g style="filter:drop-shadow(0 2px 2.400px rgba(0,0,0,.25))"><rect x="549" y="509" width="150" height="99.500" fill="#fefefe"/></g><path d="M549 511a2 2 0 0 1 2-2h146a2 2 0 0 1 2 2v6h-150z" fill="#3d927f"/><circle cx="676.8" cy="512.900" r="1.700" fill="#d5e6e2"/><circle cx="685" cy="512.900" r="1.700" fill="#d5e6e2"/><circle cx="693" cy="512.900" r="1.700" fill="#d5e6e2"/><rect x="557.500" y="526.500" width="133" height="74" stroke="#117865" stroke-width="2" stroke-dasharray="6.500 3.200"/><g style="filter:drop-shadow(0 2px 2.400px rgba(0,0,0,.25))"><rect x="737.300" y="509" width="80.300" height="99.800" fill="#fefefe"/></g><path d="M746.800 519.200h32.400" stroke="#3d927f" stroke-width="3.400" stroke-linecap="round"/><path d="M745.600 529.8l4.400 4.400 4.400-4.400" stroke="#3d927f" stroke-width="1.700"/><rect x="760.200" y="528.7" width="6.300" height="6.300" stroke="#3d927f" stroke-width="1.600"/><path d="M771.200 532h32" stroke="#3d927f" stroke-width="1.600"/><path d="M745.600 543.5999999999999l4.400 4.400 4.400-4.400" stroke="#2b5d5c" stroke-width="1.700"/><rect x="760.200" y="542.5" width="6.300" height="6.300" stroke="#2b5d5c" stroke-width="1.600"/><path d="M771.200 545.8h32" stroke="#2b5d5c" stroke-width="1.600"/><path d="M745.600 557.8l4.400 4.400 4.400-4.400" stroke="#3d927f" stroke-width="1.700"/><rect x="760.200" y="556.7" width="6.300" height="6.300" stroke="#3d927f" stroke-width="1.600"/><path d="M771.200 560h32" stroke="#3d927f" stroke-width="1.600"/><path d="M745.600 576.2l4.400-4.400 4.400 4.400" stroke="#3d927f" stroke-width="1.700"/><rect x="760.200" y="570.7" width="6.300" height="6.300" stroke="#3d927f" stroke-width="1.600"/><path d="M771.200 574h32" stroke="#3d927f" stroke-width="1.600"/><path d="M775.300 586.1h31.800" stroke="#3d927f" stroke-width="1.600"/><path d="M775.300 598.2h31.800" stroke="#3d927f" stroke-width="1.600"/><g style="filter:drop-shadow(0 1.200px 1.600px rgba(0,0,0,.25))"><rect x="648.800" y="553" width="97.800" height="22" rx="3.500" fill="#fefefe"/></g><rect x="654.800" y="558.200" width="12" height="11.600" rx="1" fill="#117865"/><path d="M656.600 564.200l3 3 6-6.600" stroke="#fff" stroke-width="1.800"/><path d="M675 564h58.400" stroke="#323130" stroke-width="1.800"/><g style="filter:drop-shadow(0 1.200px 1.600px rgba(0,0,0,.25))"><path d="M697.300 569l3.700 23.800 6.200-5.400 7.300 9.200 9.500-7.600-7.300-8.800 7.400-4.300z" fill="#ededec" stroke="#605e5c" stroke-width="1.400" stroke-linejoin="round"/></g></svg>
<span class="t" style="left:491.77px;top:250.00px;font-size:24.4px;line-height:32px;transform:scaleX(1.0136);color:#201f1e;-webkit-text-stroke:0.68px #201f1e">Build visuals with your data</span>
<span class="t" style="left:359.60px;top:295.00px;font-size:19.6px;line-height:25px;transform:scaleX(1.0232);color:#2b2a29">Select or drag fields from the </span>
<span class="t" style="left:621.28px;top:295.00px;font-size:19.6px;line-height:25px;transform:scaleX(1.0175);color:#201f1e;-webkit-text-stroke:0.55px #201f1e">Data</span>
<span class="t" style="left:663.90px;top:295.00px;font-size:19.6px;line-height:25px;transform:scaleX(1.0239);color:#2b2a29"> pane onto the report canvas.</span>
</div>
<div id="pagetabs" class="sec" style="left:41px;top:972px;width:1484px;height:35px">
<svg style="left:0;top:0" width="1484" height="35" viewBox="41 972 1484 35" fill="none"><g stroke="#3b3a39" stroke-width="1.300"><rect x="53.700" y="980" width="17.600" height="10" rx="1"/><path d="M62.500 990v2.400M59 992.500h7"/></g><path d="M52.600 1001.600h20.600" stroke="#117865" stroke-width="2.800" stroke-linecap="round"/><g stroke="#484644" stroke-width="1.200"><rect x="101.100" y="977.800" width="11.600" height="18.200" rx="1.500"/><path d="M106 993.300h2" stroke-width="1.300"/></g><path d="M139 986.200v8.200l-4.300-4.100z" fill="#c8c6c4"/><path d="M157 986.200v8.200l4.300-4.100z" fill="#c8c6c4"/><rect x="168" y="972" width="76.500" height="35" fill="#fefefd"/><rect x="168" y="972" width="1" height="31" fill="#797775"/><rect x="169" y="1003" width="75.500" height="4" fill="#117865"/><rect x="244.500" y="972" width="39.500" height="35" fill="#117865"/><path d="M259.400 990.100h10.400M264.600 984.900v10.400" stroke="#fff" stroke-width="2.600"/></svg>
<span class="t" style="left:147.61px;top:11.00px;font-size:12.3px;line-height:16px;transform:scaleX(0.8889);color:#252423;-webkit-text-stroke:0.34px #252423">Page 1</span>
</div>
<div id="filters" class="sec" style="left:1324px;top:160px;width:201px;height:812px">
<svg style="left:0;top:0" width="201" height="812" viewBox="1324 160 201 812" fill="none"><path d="M1337.400 173.200h15.200l-5.700 6.800v5.300h-3.800v-5.300z" stroke="#201f1e" stroke-width="1.500" stroke-linejoin="round"/><g stroke="#252423" stroke-width="1.200"><path d="M1473.200 180.500c1-3.400 3.300-5.200 5.700-5.200s4.700 1.800 5.700 5.200"/><circle cx="1478.900" cy="180" r="2.100"/></g><path d="M1502.6 173.6L1508.6 179.3L1502.6 185M1508.6 173.6L1514.6 179.3L1508.6 185" stroke="#252423" stroke-width="1.3"/><rect x="1333.500" y="205.500" width="178.500" height="30" rx="2" fill="#fefefd" stroke="#c8c6c4"/><g stroke="#252423" stroke-width="1.2"><circle cx="1353.4" cy="218" r="4.7"/><path d="M1350.1 221.3L1344.3 227"/></g><rect x="1325" y="240" width="200" height="1" fill="#c8c6c4"/><circle cx="1502.7" cy="268" r="0.9" fill="#605e5c"/><circle cx="1507.1999999999998" cy="268" r="0.9" fill="#605e5c"/><circle cx="1511.6999999999998" cy="268" r="0.9" fill="#605e5c"/><circle cx="1502.7" cy="365.3" r="0.9" fill="#605e5c"/><circle cx="1507.1999999999998" cy="365.3" r="0.9" fill="#605e5c"/><circle cx="1511.6999999999998" cy="365.3" r="0.9" fill="#605e5c"/><rect x="1333.500" y="282.500" width="182.500" height="45" rx="2" fill="#fefefd" stroke="#dcdad8"/><rect x="1333.500" y="379.500" width="182.500" height="45" rx="2" fill="#fefefd" stroke="#dcdad8"/></svg>
<span class="t" style="left:36.41px;top:10.00px;font-size:14.9px;line-height:19px;transform:scaleX(1.0924);color:#252423;-webkit-text-stroke:0.42px #252423">Filters</span>
<span class="t" style="left:49.20px;top:52.00px;font-size:13.4px;line-height:17px;transform:scaleX(0.9290);color:#252423">Search</span>
<span class="t" style="left:8.63px;top:98.00px;font-size:12.2px;line-height:16px;transform:scaleX(0.9746);color:#252423">Filters on this page</span>
<span class="t" style="left:48.40px;top:138.00px;font-size:12.2px;line-height:16px;transform:scaleX(0.9730);color:#252423">Add data fields here</span>
<span class="t" style="left:8.63px;top:195.00px;font-size:12.2px;line-height:16px;transform:scaleX(0.9654);color:#252423">Filters on all pages</span>
<span class="t" style="left:48.40px;top:235.00px;font-size:12.2px;line-height:16px;transform:scaleX(0.9730);color:#252423">Add data fields here</span>
</div>
<div id="build" class="sec" style="left:1525px;top:160px;width:181px;height:847px">
<svg style="left:0;top:0" width="181" height="847" viewBox="1525 160 181 847" fill="none"><circle cx="1663.95" cy="178.9" r="1.05" fill="#252423"/><circle cx="1670.1" cy="178.9" r="1.05" fill="#252423"/><circle cx="1676.25" cy="178.9" r="1.05" fill="#252423"/><path d="M1686.2 173.6L1691.9 179.3L1686.2 185M1691.9 173.6L1697.6 179.3L1691.9 185" stroke="#252423" stroke-width="1.2"/><rect x="1534.500" y="217.500" width="163" height="213" rx="2" fill="#fefefd" stroke="#8a8886"/><g transform="translate(1542 224)" fill="none"><path d="M.5 0v17.500H18" stroke="#3b3a39"/><rect x="0.5" y="2.5" width="5" height="4" fill="#fff" stroke="#3b3a39" stroke-width="1"/><rect x="5.5" y="2.5" width="6" height="4" fill="#8ec1ed" stroke="#1670c6" stroke-width="1"/><rect x="0.5" y="10.5" width="8" height="4" fill="#fff" stroke="#3b3a39" stroke-width="1"/><rect x="8.5" y="10.5" width="7" height="4" fill="#c8c6c4" stroke="#a8a6a4" stroke-width="1"/></g><g transform="translate(1568 224)" fill="none"><path d="M.5 0v17.500H18" stroke="#3b3a39"/><rect x="3.5" y="11.5" width="4" height="6" fill="#fff" stroke="#3b3a39" stroke-width="1"/><rect x="3.5" y="5.5" width="4" height="6" fill="#8ec1ed" stroke="#1670c6" stroke-width="1"/><rect x="11.5" y="10.5" width="4" height="7" fill="#fff" stroke="#3b3a39" stroke-width="1"/><rect x="11.5" y="2.5" width="4" height="8" fill="#c8c6c4" stroke="#a8a6a4" stroke-width="1"/></g><g transform="translate(1594 224)" fill="none"><path d="M1 0v17H18" stroke="#3b3a39" stroke-width="1.800"/><rect x="1.8" y="0.8" width="15.6" height="3.4" fill="#8ec1ed" stroke="#1670c6" stroke-width="1.2"/><rect x="1.8" y="7.6" width="9" height="3.2" fill="#c8c6c4" stroke="#605e5c" stroke-width="1.2"/><rect x="1.8" y="12.4" width="11" height="3.2" fill="#fff" stroke="#3b3a39" stroke-width="1.4"/></g><g transform="translate(1620 224)" fill="none"><path d="M1 0v17H18" stroke="#3b3a39" stroke-width="1.800"/><rect x="1.8" y="0.8" width="4.2" height="16" fill="#8ec1ed" stroke="#1670c6" stroke-width="1.2"/><rect x="9.2" y="9.5" width="3.4" height="7.5" fill="#c8c6c4" stroke="#605e5c" stroke-width="1.2"/><rect x="14" y="4.8" width="3.4" height="12.2" fill="#fff" stroke="#3b3a39" stroke-width="1.4"/></g><g transform="translate(1646 224)" fill="none"><path d="M.5 0v17.500H18" stroke="#3b3a39"/><rect x="0.5" y="2.5" width="4" height="4" fill="#fff" stroke="#3b3a39" stroke-width="1"/><rect x="4.5" y="2.5" width="11" height="4" fill="#8ec1ed" stroke="#1670c6" stroke-width="1"/><rect x="0.5" y="10.5" width="10" height="4" fill="#fff" stroke="#3b3a39" stroke-width="1"/><rect x="10.5" y="10.5" width="5" height="4" fill="#c8c6c4" stroke="#a8a6a4" stroke-width="1"/></g><g transform="translate(1672 224)" fill="none"><path d="M.5 0v17.500H18" stroke="#3b3a39"/><rect x="3.5" y="13.5" width="4" height="4" fill="#fff" stroke="#3b3a39" stroke-width="1"/><rect x="3.5" y="2.5" width="4" height="11" fill="#8ec1ed" stroke="#1670c6" stroke-width="1"/><rect x="11.5" y="6.5" width="4" height="11" fill="#fff" stroke="#3b3a39" stroke-width="1"/><rect x="11.5" y="2.5" width="4" height="4" fill="#c8c6c4" stroke="#a8a6a4" stroke-width="1"/></g><g transform="translate(1542 250)" fill="none"><path d="M.5 0v17.500H18" stroke="#3b3a39"/><path d="M1 15l8-10 3 3 5-4.500" stroke="#1670c6" stroke-width="1.200"/><path d="M1 11l5-6.500 5 5.500 6-6" stroke="#3b3a39" stroke-width="1.200"/></g><g transform="translate(1568 250)" fill="none"><path d="M10 10l4-8.500 3.500 7v9H10z" fill="#c8c6c4" stroke="#a8a6a4" stroke-width=".8"/><path d="M.8 10L6.500 1.800l5.500 8" stroke="#3b3a39" stroke-width="1.200" fill="#fff"/><path d="M.600 17.400V10l3.400 4 6.500-8.500 7 11.900z" fill="#8ec1ed" stroke="#1670c6" stroke-width="1.100"/></g><g transform="translate(1594 250)" fill="none"><path d="M.5 0v17.500H18" stroke="#3b3a39"/><path d="M1 2.500l5.500 5.500 5.500-5 5.500 3.500v7.500l-5.500-4.500-5.500 6-5.500-6z" fill="#8ec1ed" stroke="#1670c6" stroke-width="1.100"/></g><g transform="translate(1620 250)" fill="none"><path d="M.5 0v17.500H18" stroke="#3b3a39"/><path d="M1 2h16.500v10.500l-5.500-4.500-5.500 5.500-5.500-5z" fill="#8ec1ed" stroke="#1670c6" stroke-width="1.100"/></g><g transform="translate(1646 250)" fill="none"><path d="M.5 0v17.500H18" stroke="#3b3a39"/><rect x="3.5" y="12.5" width="4" height="5" fill="#fff" stroke="#3b3a39" stroke-width="1"/><rect x="3.5" y="2.5" width="4" height="10" fill="#8ec1ed" stroke="#1670c6" stroke-width="1"/><rect x="11.5" y="9.5" width="4" height="8" fill="#fff" stroke="#3b3a39" stroke-width="1"/><rect x="11.5" y="2.5" width="4" height="7" fill="#c8c6c4" stroke="#a8a6a4" stroke-width="1"/><path d="M1 15l5.500-7 4 5 7-8" stroke="#3b3a39" stroke-width="1.300"/></g><g transform="translate(1672 250)" fill="none"><path d="M.5 0v17.500H18" stroke="#3b3a39"/><rect x="3.5" y="8.5" width="4" height="9" fill="#8ec1ed" stroke="#1670c6" stroke-width="1"/><rect x="7.5" y="1.5" width="4" height="16" fill="#fff" stroke="#3b3a39" stroke-width="1"/><rect x="11.5" y="5.5" width="4" height="12" fill="#c8c6c4" stroke="#a8a6a4" stroke-width="1"/><path d="M1 15l5.500-7 4.500 5.500 7-8" stroke="#3b3a39" stroke-width="1.300"/></g><g transform="translate(1542 276)" fill="none"><path d="M.5 0v17.500H18" stroke="#3b3a39"/><path d="M2 3.500l6 3.500 7-4v4l-7 4.500-6-4z" fill="#c8c6c4" stroke="#797775" stroke-width=".9"/><path d="M2 11h4.500l3 2 3-2.500H16v4H2z" fill="#f29a2e" stroke="#e0760f" stroke-width=".8"/><path d="M2 6.500c3 0 3.500 6 7 6s3.500-6.500 7-6.500v3.500c-3 0-3.500 6-7 6s-4-5.500-7-5.500z" fill="#5aa5e6" stroke="#1670c6" stroke-width=".9"/></g><g transform="translate(1568 276)" fill="none"><path d="M.5 0v17.500H18" stroke="#3b3a39"/><path d="M2.500 17.500V5.500h3v12M12.500 17.500V1.500h4v16M14.500 1.500v16" stroke="#3b3a39"/><path d="M5.500 5.500h2v5h3" stroke="#8a8886"/><rect x="10" y="1" width="2.5" height="9.5" fill="#1670c6"/></g><g transform="translate(1594 276)" fill="none"><rect x="0.8" y="1.6" width="16.4" height="4.8" fill="#8ec1ed" stroke="#1670c6" stroke-width="1.4"/><rect x="2.6" y="6.4" width="12.8" height="4.8" fill="#8ec1ed" stroke="#1670c6" stroke-width="1.4"/><rect x="5.6" y="11.2" width="6.8" height="5" fill="#8ec1ed" stroke="#1670c6" stroke-width="1.4"/></g><g transform="translate(1620 276)" fill="none"><path d="M.5 0v17.500H18" stroke="#3b3a39"/><rect x="3.2" y="4.3" width="2.8" height="2.8" fill="#7db8ec"/><rect x="8" y="7.2" width="2.8" height="2.8" fill="#7db8ec"/><rect x="13" y="11.2" width="2.8" height="2.8" fill="#7db8ec"/><rect x="13" y="1.3" width="2.8" height="2.8" fill="#252423"/><rect x="3.2" y="12" width="2.8" height="2.8" fill="#252423"/></g><g transform="translate(1646 276)" fill="none"><circle cx="9" cy="9" r="8.300" fill="#f6f6f6" stroke="#3b3a39" stroke-width="1.100"/><path d="M9 .700a8.300 8.300 0 0 1 5.900 14.100L9 9z" fill="#8ec1ed" stroke="#1670c6" stroke-width="1.100" stroke-linejoin="round"/></g><g transform="translate(1672 276)" fill="none"><circle cx="9" cy="9" r="6.200" stroke="#8ec1ed" stroke-width="4.200"/><circle cx="9" cy="9" r="8.300" stroke="#1670c6" stroke-width="1.100"/><circle cx="9" cy="9" r="4" stroke="#1670c6" stroke-width="1.100" fill="#fff"/><path d="M9 .700A8.300 8.300 0 0 0 .7 9h4.300a4 4 0 0 1 4-4z" fill="#f6f6f6" stroke="#797775" stroke-width="1"/></g><g transform="translate(1542 302)" fill="none"><rect x="0.6" y="0.6" width="8.4" height="8.4" fill="#8ec1ed" stroke="#1670c6" stroke-width="1.2"/><rect x="0.6" y="9" width="8.4" height="8.4" fill="#8ec1ed" stroke="#1670c6" stroke-width="1.2"/><path d="M9 .600h8.400v16.800H9M9 6h8.400M13.500 11.500h3.900M13.500 6v11.400" stroke="#3b3a39" stroke-width="1.200"/></g><g transform="translate(1568 302)" fill="none"><g transform="scale(1.125)"><circle cx="8.700" cy="7.200" r="4.800" fill="#f4f8f4" stroke="#3b3a39" stroke-width="1.200"/><path d="M6.500 5.200c1.300-1.600 3.600-.4 2.700.9-.7 1.100-2.200 1.300-2.700-.9zM9 8.700c1.100-.7 3.100-.4 2.700 1.100-.4 1.300-2.200 1.800-3.100.700z" fill="#2f9e44"/><path d="M9.300 .600A7.200 7.200 0 0 0 4.600 13.400M3 15.400h11M8.700 12.200v3.200" stroke="#3b3a39" stroke-width="1.200"/></g></g><g transform="translate(1594 302)" fill="none"><path d="M.500 1.500H5.200L7.500 3.500H11.500L13.200 1.500H17.500V11.500C17.300 12.600 16.800 13.400 16.100 13.800L12.600 15.200L9.200 15.500L7.500 16.600L5.700 16.100L2.900 13.800L.900 11.500L.400 8.600L1.200 5.200Z" fill="#c8c6c4" stroke="#484644" stroke-width="1" stroke-linejoin="round"/><path d="M.500 1.500H5.200L7.500 3.500L7.700 8.100H.500L1.200 5.200Z" fill="#8ec1ed" stroke="#1670c6" stroke-width="1.100" stroke-linejoin="round"/><path d="M10.300 8.400H17.500V11.500C17.300 12.600 16.800 13.400 16.100 13.800L12.600 15.200L8.900 15L9.200 12Z" fill="#8ec1ed" stroke="#1670c6" stroke-width="1.100" stroke-linejoin="round"/></g><g transform="translate(1620 302)" fill="none"><path d="M.500 1.500H5.200L7.500 3.500H11.500L13.200 1.500H17.500V11.500C17.300 12.600 16.800 13.400 16.100 13.800L12.600 15.200L9.200 15.500L7.500 16.600L5.700 16.100L2.900 13.800L.900 11.500L.400 8.600L1.200 5.200Z" fill="#fdfdfd" stroke="#3b3a39" stroke-width="1" stroke-linejoin="round"/><path d="M.500 1.500H5.200L7.500 3.500L7.700 8.100H.500L1.200 5.200Z" fill="#fdfdfd" stroke="#1670c6" stroke-width="1.100" stroke-linejoin="round"/><path d="M10.300 8.400H17.500V11.500C17.300 12.600 16.800 13.400 16.100 13.800L12.600 15.200L8.900 15L9.200 12Z" fill="#fdfdfd" stroke="#1670c6" stroke-width="1.100" stroke-linejoin="round"/></g><g transform="translate(1646 302)" fill="none"><path d="M12.500 -.800L17.100 18.600L11.100 12.300L1.300 16.300Z" fill="#3d97e3"/><path d="M12.500 -.800L17.100 18.600L11.100 12.300Z" fill="#1f7fd6"/></g><g transform="translate(1672 302)" fill="none"><g transform="scale(1.125)"><path d="M.600 11.500A7.400 7.400 0 0 1 5 4.730L6.380 7.840A4 4 0 0 0 4 11.500z" fill="#fdfdfd" stroke="#3b3a39" stroke-width="1.100" stroke-linejoin="round"/><path d="M5 4.730A7.400 7.400 0 0 1 15.400 11.500H12A4 4 0 0 0 6.380 7.840z" fill="#7db8ec" stroke="#1670c6" stroke-width="1.100" stroke-linejoin="round"/><path d="M7.400 11.300l2.800-3" stroke="#252423" stroke-width="1.500" stroke-linecap="round"/></g></g><g transform="translate(1542 328)" fill="none"><rect x="0.6" y="2.6" width="16.8" height="12.8" fill="#fff" stroke="#3b3a39" stroke-width="1.2"/><text x="2.400" y="11.600" font-size="9.600" fill="#2b88d8" font-family="Liberation Sans, sans-serif" textLength="13.200" lengthAdjust="spacingAndGlyphs">123</text><path d="M2.500 13h13" stroke="#797775" stroke-width=".8"/></g><g transform="translate(1568 328)" fill="none"><rect x="0.6" y="0.6" width="16.8" height="16.8" fill="#fff" stroke="#3b3a39" stroke-width="1.2"/><path d="M3.500 2.500v13" stroke="#797775" stroke-width=".8"/><path d="M5.300 5h9.500M5.300 11h9.500" stroke="#155fb0" stroke-width="1.800"/><path d="M5.300 7.800h4.500M5.300 13.800h4.500" stroke="#797775" stroke-width=".9"/></g><g transform="translate(1594 328)" fill="none"><rect x="0.6" y="1.6" width="16.8" height="13.8" fill="#fff" stroke="#3b3a39" stroke-width="1.2"/><path d="M3 9.500l3-5 3 5z" stroke="#2f9e44" stroke-width="1.100"/><path d="M6 7v1.500" stroke="#2f9e44"/><path d="M10.500 4.500h6l-3 5.200z" fill="#e8453c" stroke="#d13438" stroke-width=".8"/><path d="M12.600 5.800h1.800l-.9 1.600z" fill="#ffd24a"/><path d="M2.500 12.600h13" stroke="#797775" stroke-width=".8"/></g><g transform="translate(1620 328)" fill="none"><path d="M.6 3.500h16.800" stroke="#c8c6c4" stroke-width="2"/><path d="M10 17.400H.6V.6h16.800v9" stroke="#3b3a39" stroke-width="1.200"/><rect x="3.5" y="6.5" width="3" height="3" fill="#c8c6c4" stroke="#605e5c" stroke-width="1"/><rect x="3.5" y="11.5" width="3" height="3" fill="#c8c6c4" stroke="#605e5c" stroke-width="1"/><path d="M9.500 10.200h8.600l-3 3.600v4.400h-2.600v-4.400z" fill="#fff" stroke="#3b3a39" stroke-width="1.200" stroke-linejoin="round"/></g><g transform="translate(1646 328)" fill="none"><rect x="1" y="1" width="16" height="2.5" fill="#c8c6c4"/><path d="M.5 8.500h17M.5 13.500h17M6.500 3.500v14M12.500 3.500v14" stroke="#7a7876"/><path d="M.5 .500h17v17H.5zM.5 3.500h17" stroke="#3b3a39" stroke-width="1.100"/></g><g transform="translate(1672 328)" fill="none"><rect x="1" y="1" width="16" height="2.5" fill="#c8c6c4"/><rect x="12.5" y="3.5" width="5" height="14" fill="#8ec1ed"/><rect x="0.5" y="13.5" width="17" height="4" fill="#8ec1ed"/><path d="M.5 8.500h12M6.500 3.500v10" stroke="#7a7876"/><path d="M17.500 3.500V.5H.5v13M.5 3.500h17" stroke="#3b3a39" stroke-width="1.100"/><path d="M12.500 3.500v14M.5 13.500h17M12.500 8.500h5M6.500 13.500v4M.5 13.500v4h17v-14" stroke="#1670c6" stroke-width="1.100"/></g><g transform="translate(1542 354)" fill="none"><text x="3.600" y="15" font-size="17" font-weight="700" fill="#2480cf" font-family="Liberation Sans, sans-serif" textLength="9.800" lengthAdjust="spacingAndGlyphs">R</text></g><g transform="translate(1568 354)" fill="none"><text x="-.3" y="12.900" font-size="16.500" font-weight="700" fill="#2480cf" font-family="Liberation Sans, sans-serif" textLength="18.600" lengthAdjust="spacingAndGlyphs">Py</text></g><g transform="translate(1594 354)" fill="none"><path d="M.5 0v17.500H18" stroke="#3b3a39"/><path d="M1 3.500h11.500" stroke="#1670c6" stroke-width="1.100"/><circle cx="14.500" cy="3.500" r="2" fill="#8ec1ed" stroke="#1670c6" stroke-width="1.100"/><path d="M1 8.500h8M1 12.500h4" stroke="#605e5c" stroke-width="1"/><rect x="9.5" y="7.2" width="2.6" height="2.6" fill="#c8c6c4" stroke="#605e5c" stroke-width="0.9"/><rect x="5.3" y="11.2" width="2.6" height="2.6" fill="#c8c6c4" stroke="#605e5c" stroke-width="0.9"/></g><g transform="translate(1620 354)" fill="none"><path d="M6.500 8.800h3.500M10 3v12M10 3h2.500M10 15h2.500M10 8.800h2.500" stroke="#3b3a39" stroke-width="1.200"/><rect x="0.6" y="7" width="6" height="3.8" fill="#8ec1ed" stroke="#1670c6" stroke-width="1.1"/><rect x="12.5" y="0.8" width="5" height="3.8" fill="#8ec1ed" stroke="#1670c6" stroke-width="1.1"/><rect x="12.5" y="7" width="5" height="3.8" fill="#8ec1ed" stroke="#1670c6" stroke-width="1.1"/><rect x="12.5" y="13.2" width="5" height="3.8" fill="#8ec1ed" stroke="#1670c6" stroke-width="1.1"/></g><g transform="translate(1646 354)" fill="none"><path d="M.7 1.700h16.600v11H7.500L3.500 17v-4.300H.7z" fill="#fff" stroke="#1670c6" stroke-width="1.300" stroke-linejoin="round"/></g><g transform="translate(1672 354)" fill="none"><path d="M2 4.500V.6h8.500l4.300 4.300v12.500H2V10" stroke="#3b3a39" stroke-width="1.200"/><path d="M10.500 .600v4.300h4.300" stroke="#3b3a39" stroke-width="1.100"/><rect x="0.7" y="5.6" width="3" height="3" fill="#8ec1ed" stroke="#1670c6" stroke-width="1.1"/><path d="M5.500 8.800h7M4.500 11.800h5.500" stroke="#1670c6" stroke-width="1"/></g><g transform="translate(1542 380)" fill="none"><path d="M4.500 1.500h9v5.500a4.500 4.500 0 0 1-9 0zM4.500 2.800H1v1.800a3.400 3.400 0 0 0 3.600 3.400M13.500 2.800H17v1.800a3.400 3.400 0 0 1-3.600 3.400M9 11.500l-2.600 4.200h5.200z" stroke="#3b3a39" stroke-width="1.200" stroke-linejoin="round"/><path d="M5 1.200h8" stroke="#1670c6" stroke-width="1.200"/><rect x="4.3" y="15.5" width="9.4" height="1.8" fill="#8ec1ed" stroke="#1670c6" stroke-width="1"/></g><g transform="translate(1568 380)" fill="none"><path d="M2 .800h8.500l5 5v12H2z" fill="#fbfbfb" stroke="#252423" stroke-width="1.600" stroke-linejoin="round"/><path d="M10.500 .800v5h5" stroke="#252423" stroke-width="1.300"/><rect x="4.3" y="11" width="2.2" height="5" fill="#252423"/><rect x="7.8" y="13" width="2.2" height="3" fill="#252423"/><rect x="11.3" y="8.5" width="2.2" height="7.5" fill="#252423"/></g><g transform="translate(1594 380)" fill="none"><rect x="1.2" y="2.6" width="16.2" height="12.8" fill="#fff" stroke="#3b3a39" stroke-width="1.2"/><text x="4.200" y="12.200" font-size="9.600" fill="#2b88d8" font-family="Liberation Sans, sans-serif" textLength="12.400" lengthAdjust="spacingAndGlyphs">123</text><path d="M3 13.200h13" stroke="#797775" stroke-width=".8"/><path d="M2.600 -.900H7.600L4.800 3.300H7.200L-.300 10.900L2 5.500H-1Z" fill="#f8b84a" stroke="#e0760f" stroke-width=".9" stroke-linejoin="round"/></g><g transform="translate(1620 380)" fill="none"><path d="M4 3.500h13.400" stroke="#c8c6c4" stroke-width="2"/><path d="M10 17.400H.6V9M5 .600h12.400v9" stroke="#3b3a39" stroke-width="1.200"/><rect x="3.5" y="7" width="3" height="3" fill="#c8c6c4" stroke="#605e5c" stroke-width="1"/><rect x="3.5" y="12" width="3" height="3" fill="#c8c6c4" stroke="#605e5c" stroke-width="1"/><path d="M9.500 10.200h8.600l-3 3.600v4.400h-2.600v-4.400z" fill="#fff" stroke="#3b3a39" stroke-width="1.200" stroke-linejoin="round"/><path d="M2.600 -.900H7.600L4.800 3.300H7.200L-.300 10.900L2 5.500H-1Z" fill="#f8b84a" stroke="#e0760f" stroke-width=".9" stroke-linejoin="round"/></g><g transform="translate(1646 380)" fill="none"><path d="M6 1h11.500v9M12 17H.7V8" stroke="#1670c6" stroke-width="1.400"/><path d="M16.500 4c-3-1-5 0-5 2.500s-1.500 2-2.500 4.500 1 3.500-.5 5.500h3c1-2-.5-3 .5-5s2.500-1.500 2.500-4 1-2 2-2z" fill="#5aa5e6"/><path d="M.2 1.500a2.300 2.300 0 0 1 4.600 0v4.500l-2.300 2.800L.2 6z" fill="#e0760f"/><circle cx="2.500" cy="3" r="1" fill="#fff"/><circle cx="13.800" cy="15.500" r="2.200" fill="#e0760f"/><rect x="15.5" y="9.8" width="2.2" height="2.2" fill="#e0760f"/></g><g transform="translate(1672 380)" fill="none"><g stroke="#9b3fb0" stroke-width="1.200" stroke-linejoin="round"><path d="M6.500 1l6 8-6 8-6-8z"/><path d="M11.500 1l6 8-6 8-6-8z"/><path d="M9 4.300L12.500 9 9 13.700"/></g></g><g transform="translate(1542 406)" fill="none"><path d="M.8 1.500h10l6.500 7.500-6.500 7.500H.8L7.300 9z" stroke="#2b88d8" stroke-width="1.300" stroke-linejoin="round" fill="#fff"/><path d="M12.500 3.500L2.500 15M15 6.500L7.500 15.500" stroke="#2b88d8" stroke-width="1.200"/></g><g transform="translate(1568 406)" fill="none"><rect x="2" y="7.200" width="2" height="2" fill="#b85c14"/><rect x="8" y="7.200" width="2" height="2" fill="#b85c14"/><rect x="14" y="7.200" width="2" height="2" fill="#b85c14"/></g><rect x="1534.500" y="459.500" width="163" height="39" rx="3" fill="#f8f7f6" stroke="#484644" stroke-dasharray="4 3"/><rect x="1539.500" y="464.500" width="153.500" height="29" rx="2" fill="#fefefd" stroke="#484644"/></svg>
<span class="t" style="left:8.68px;top:11.00px;font-size:14.9px;line-height:19px;transform:scaleX(1.1153);color:#252423;-webkit-text-stroke:0.42px #252423">Build</span>
<span class="t" style="left:9.30px;top:38.00px;font-size:12.2px;line-height:16px;transform:scaleX(0.9510);color:#252423">Suggestions</span>
<span class="t" style="left:8.65px;top:280.00px;font-size:12.2px;line-height:16px;transform:scaleX(0.9453);color:#252423">Data</span>
<span class="t" style="left:62.90px;top:312.00px;font-size:12.2px;line-height:16px;transform:scaleX(1.0119);color:#252423">+Add data</span>
</div>
<div id="data" class="sec" style="left:1706px;top:160px;width:181px;height:847px">
<svg style="left:0;top:0" width="181" height="847" viewBox="1706 160 181 847" fill="none"><circle cx="1844.6499999999999" cy="179.2" r="1.05" fill="#252423"/><circle cx="1850.9" cy="179.2" r="1.05" fill="#252423"/><circle cx="1857.15" cy="179.2" r="1.05" fill="#252423"/><path d="M1867 173.4L1872.7 179.10000000000002L1867 184.8M1872.7 173.4L1878.4 179.10000000000002L1872.7 184.8" stroke="#252423" stroke-width="1.2"/><rect x="1711.500" y="205.500" width="171.500" height="26" rx="2" fill="#f6f5f4" stroke="#8a8886"/><g stroke="#605e5c" stroke-width="1.2"><circle cx="1727.6" cy="216.5" r="4.6"/><path d="M1724.3 219.7L1719.2 224.8"/></g><path d="M1723 247.800l5.600 5.400-5.600 5.400" stroke="#605e5c" stroke-width="1.200"/><g stroke="#252423" stroke-width="1.300"><rect x="1736.600" y="247.900" width="11" height="10.400" rx="2"/><path d="M1740.300 247.900v10.400M1744 247.900v10.400M1736.600 251.400h11M1736.600 254.900h11"/></g></svg>
<span class="t" style="left:9.25px;top:11.00px;font-size:14.9px;line-height:19px;transform:scaleX(1.0490);color:#252423;-webkit-text-stroke:0.42px #252423">Data</span>
<span class="t" style="left:34.30px;top:51.00px;font-size:13.6px;line-height:18px;transform:scaleX(0.9550);color:#605e5c">Search</span>
<span class="t" style="left:48.30px;top:86.00px;font-size:12.2px;line-height:16px;transform:scaleX(0.9599);color:#252423">test27700</span>
</div>
<div id="rail" class="sec" style="left:1887px;top:160px;width:33px;height:847px">
<svg style="left:0;top:0" width="33" height="847" viewBox="1887 160 33 847" fill="none"><rect x="1888.500" y="160.500" width="31" height="31" fill="#e2e1df" stroke="#5f5d5b"/><rect x="1888.500" y="192.500" width="31" height="31" fill="#e2e1df" stroke="#5f5d5b"/><g stroke="#55534f" stroke-width="1.100"><path d="M1897.400 170.400v10.600c0 1.700 3 3 6.600 3s6.600-1.300 6.600-3v-10.600" fill="#fafafa"/><ellipse cx="1904" cy="170.400" rx="6.600" ry="3" fill="#fafafa"/></g><g stroke="#55534f" stroke-width="1.100"><path d="M1896.600 215.500v-9h4v9zM1900.600 215.500v-16h4.400v16z" fill="#fafafa"/><path d="M1905 203h3.600v3"/></g><g stroke="#d8701a" stroke-width="1.300"><ellipse cx="1909.500" cy="207.800" rx="3.700" ry="1.600" fill="#fafafa"/><path d="M1905.800 207.800v7c0 .9 1.600 1.600 3.700 1.600s3.700-.7 3.700-1.600v-7" fill="#fafafa"/></g><g stroke="#55534f" stroke-width="1.100"><path d="M1896.600 245.500v-8h4v5M1900.600 237v-5h4.400v8M1905 235.500h3.600v2"/></g><path d="M1912.800 236.500l-6.800 7.500" stroke="#605e5c" stroke-width="1.400"/><path d="M1905.500 243.500c-1.500-.5-3 .3-3.500 1.800-.4 1.200-1.500 2-3 2.200 2.600 1.800 6.800 1 7.800-2z" fill="#2b88d8"/><path d="M1895 271.500h17M1903.500 263v17" stroke="#201f1e" stroke-width="1.300"/><rect x="1887" y="975" width="33" height="1" fill="#e1dfdd"/><g stroke="#323130" stroke-width="1.400" stroke-linejoin="round"><path d="M1911.04 989.51L1913.36 990.15Q1913.90 991.80 1913.36 993.45L1911.04 994.09Q1908.94 994.65 1909.50 996.75L1910.11 999.08Q1908.95 1000.37 1907.25 1000.73L1905.54 999.04Q1904.00 997.50 1902.46 999.04L1900.75 1000.73Q1899.05 1000.37 1897.89 999.08L1898.50 996.75Q1899.06 994.65 1896.96 994.09L1894.64 993.45Q1894.10 991.80 1894.64 990.15L1896.96 989.51Q1899.06 988.95 1898.50 986.85L1897.89 984.52Q1899.05 983.23 1900.75 982.87L1902.46 984.56Q1904.00 986.10 1905.54 984.56L1907.25 982.87Q1908.95 983.23 1910.11 984.52L1909.50 986.85Q1908.94 988.95 1911.04 989.51z"/><circle cx="1904" cy="991.8" r="3.0"/></g></svg>
</div>
<div id="statusbar" class="sec" style="left:0px;top:1007px;width:1920px;height:24px">
<svg style="left:0;top:0" width="1920" height="24" viewBox="0 1007 1920 24" fill="none"><rect x="1708.200" y="1019" width="4.400" height="1.600" fill="#605e5c"/><rect x="1717" y="1019" width="100" height="1" fill="#605e5c"/><rect x="1765" y="1014" width="4" height="11" fill="#605e5c"/><path d="M1823.200 1019.600h7.400M1826.900 1015.900v7.400" stroke="#605e5c" stroke-width="1.200"/><g stroke="#484644" stroke-width="1.200"><rect x="1886.600" y="1014.600" width="15.400" height="10.800" rx="1"/><path d="M1889.300 1019v-2h2.600M1896.700 1017h2.600v2M1899.300 1021v2h-2.600M1891.900 1023h-2.600v-2" stroke-width="1"/></g></svg>
<span class="t" style="left:3.76px;top:6.00px;font-size:12.2px;line-height:16px;transform:scaleX(0.9389);color:#605e5c">Page 1 of 1</span>
<span class="t" style="left:1845.00px;top:5.00px;font-size:12.2px;line-height:16px;transform:scaleX(0.8968);color:#605e5c">100%</span>
</div>
<div class="a" style="left:0;top:160px;width:1920px;height:4px;background:linear-gradient(rgba(0,0,0,.095) 0 25%,rgba(0,0,0,.062) 25% 50%,rgba(0,0,0,.03) 50% 75%,rgba(0,0,0,.014) 75%)"></div>
<svg style="left:1160px;top:455px" width="50" height="60" viewBox="1160 455 50 60"><path d="M1173.700 467.600L1173.700 497.400L1180.900 491.300L1185.500 501.800Q1186.700 504.300 1189.600 503.300Q1192.600 502 1191.700 499.600L1187.200 489.900L1195.800 489.100Z" fill="#ececeb" stroke="#0c0c0c" stroke-width="2" stroke-linejoin="round"/></svg>
</body>
</html>
